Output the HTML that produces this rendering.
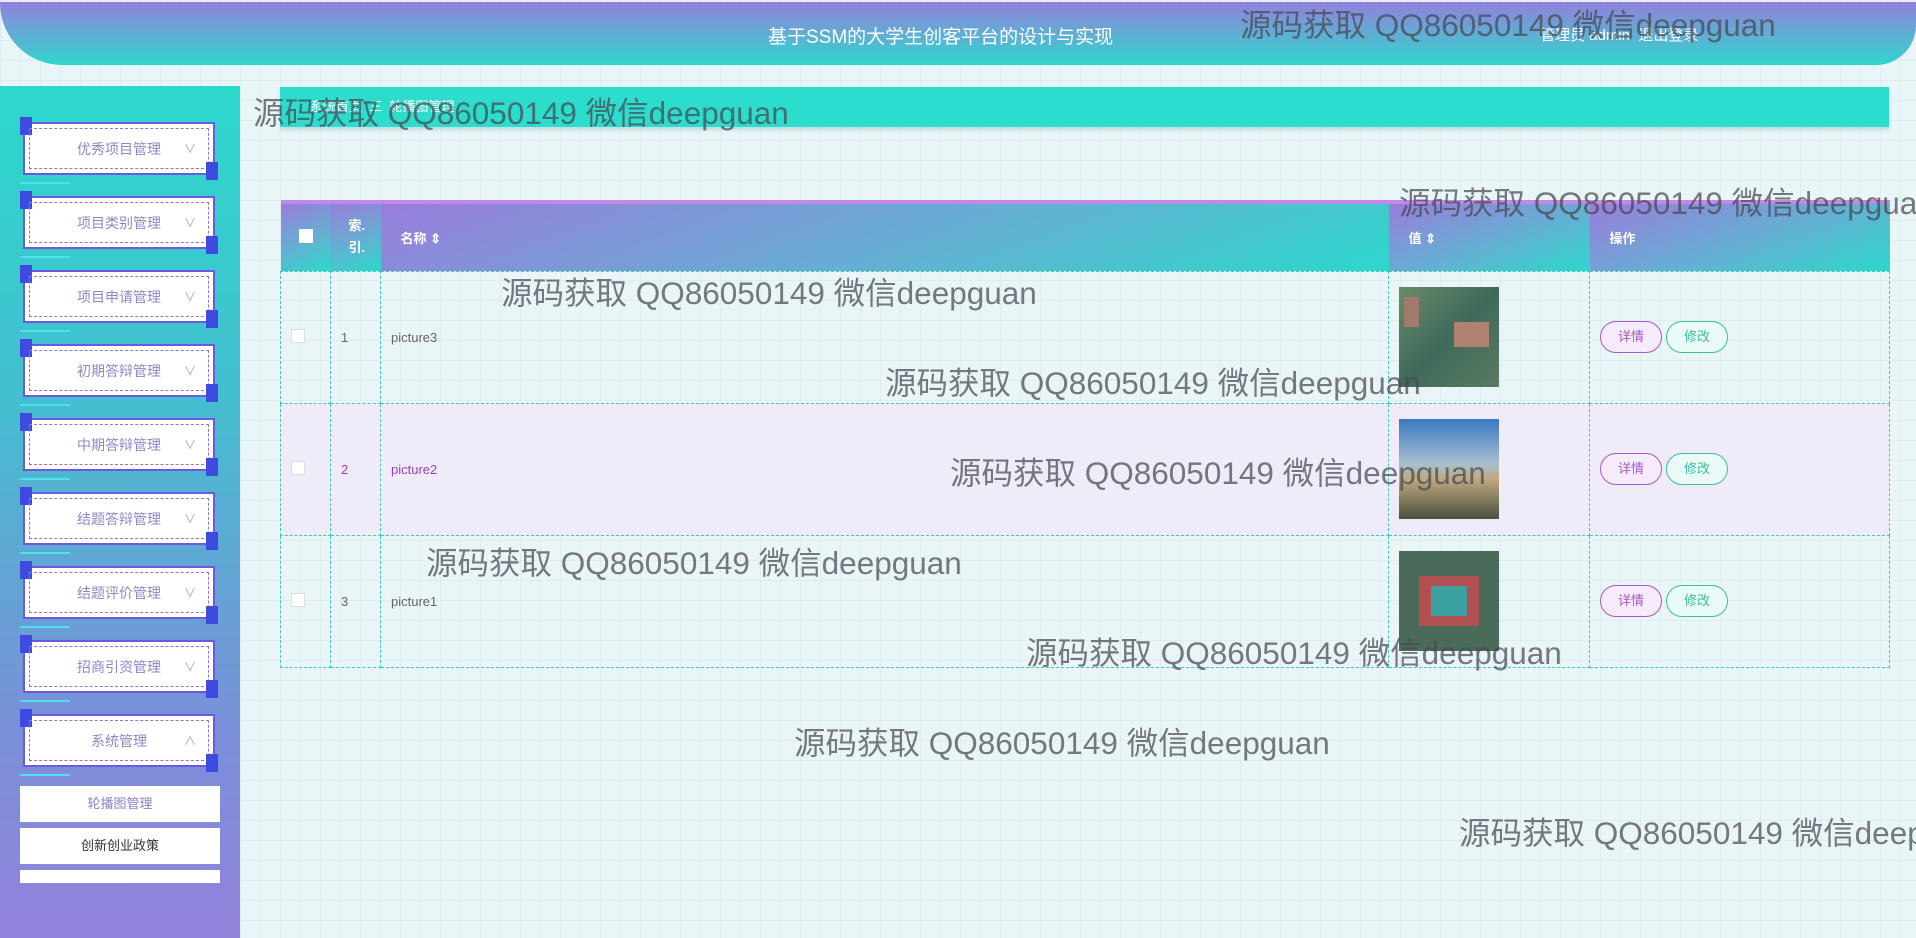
<!DOCTYPE html>
<html><head><meta charset="utf-8"><style>
*{margin:0;padding:0;box-sizing:border-box}
body{width:1916px;height:938px;overflow:hidden;position:relative;font-family:"Liberation Sans","Noto Sans CJK SC",sans-serif;
background-color:#e9f5f6;background-image:linear-gradient(rgba(180,210,215,.22) 1px,transparent 1px),linear-gradient(90deg,rgba(180,210,215,.22) 1px,transparent 1px);background-size:20px 20px;}
.hdr{position:absolute;left:0;top:2px;width:1916px;height:63px;background:linear-gradient(180deg,#9280dc 0%,#5cb1d4 55%,#2ed6cc 100%);border-radius:0 0 40px 62px}
.title{position:absolute;left:768px;top:22px;color:#fff;font-size:19px}
.user{position:absolute;left:1540px;top:24px;color:#fff;font-size:15px}
.side{position:absolute;left:0;top:86px;width:240px;height:852px;background:linear-gradient(180deg,#2dd8cc 0%,#42c0d0 35%,#7a90d8 75%,#9282dc 100%)}
.mi{position:absolute;left:23px;width:192px;height:53px;background:#fff;border:2px solid #6a5ae0}
.mi:before{content:"";position:absolute;left:-5px;top:-7px;width:12px;height:18px;background:#3f4ae0}
.mi:after{content:"";position:absolute;right:-5px;bottom:-7px;width:12px;height:18px;background:#3f4ae0}
.mi .in{position:absolute;left:4px;top:4px;right:4px;bottom:4px;border:1px dashed #9a72c0;text-align:center;line-height:41px;color:#9087c8;font-size:14px}
.mi .ar{position:absolute;right:12px;top:0;color:#aaa;font-size:12px}
.ln{position:absolute;left:20px;width:50px;height:2px;background:#4fe0f0}
.sub{position:absolute;left:20px;width:200px;height:36px;background:#fff;text-align:center;line-height:36px;font-size:13px}
.crumb{position:absolute;left:280px;top:87px;width:1609px;height:40px;background:#2cdccc;box-shadow:0 3px 3px rgba(100,170,180,.3);color:#fff;font-size:13px;line-height:40px;padding-left:30px}
table{position:absolute;left:280px;top:200px;width:1610px;border-collapse:collapse;border-top:4px solid #c28ae6}
th{height:69px;background:linear-gradient(160deg,#9a7ddc 0%,#5fb4d2 60%,#2cd8cc 100%);color:#fff;font-size:13px;text-align:left;padding-left:20px;font-weight:bold}
td{height:132px;border:1px dashed #3cc9c0;font-size:13px;color:#666;padding-left:10px}
tr.h td{background:#efebf8;color:#9b3fb8;border-color:#3cc9c0}
.cb{display:inline-block;width:14px;height:14px;background:#fff;border:1px solid #ddd}
.img{width:100px;height:100px;display:block}
.b{display:inline-block;width:62px;height:32px;border-radius:16px;text-align:center;line-height:30px;font-size:13px;margin-right:4px}
.b1{border:1px solid #a65ac8;background:#f6ebfa;color:#a65ac8}
.b2{border:1px solid #3cbea0;background:#eafaf6;color:#3cbea0}
.wm{position:absolute;font-size:31.5px;color:rgba(70,70,80,.72);white-space:nowrap;font-family:"Liberation Sans","Noto Sans CJK SC",sans-serif}
</style></head><body>
<div class="hdr"></div>
<div class="title">基于SSM的大学生创客平台的设计与实现</div>
<div class="user">管理员 admin &nbsp;退出登录</div>

<div class="side"></div>
<div class="mi" style="top:122px"><div class="in">优秀项目管理<span class="ar">∨</span></div></div><div class="ln" style="top:182px"></div>
<div class="mi" style="top:196px"><div class="in">项目类别管理<span class="ar">∨</span></div></div><div class="ln" style="top:256px"></div>
<div class="mi" style="top:270px"><div class="in">项目申请管理<span class="ar">∨</span></div></div><div class="ln" style="top:330px"></div>
<div class="mi" style="top:344px"><div class="in">初期答辩管理<span class="ar">∨</span></div></div><div class="ln" style="top:404px"></div>
<div class="mi" style="top:418px"><div class="in">中期答辩管理<span class="ar">∨</span></div></div><div class="ln" style="top:478px"></div>
<div class="mi" style="top:492px"><div class="in">结题答辩管理<span class="ar">∨</span></div></div><div class="ln" style="top:552px"></div>
<div class="mi" style="top:566px"><div class="in">结题评价管理<span class="ar">∨</span></div></div><div class="ln" style="top:626px"></div>
<div class="mi" style="top:640px"><div class="in">招商引资管理<span class="ar">∨</span></div></div><div class="ln" style="top:700px"></div>
<div class="mi" style="top:714px"><div class="in">系统管理<span class="ar">∧</span></div></div><div class="ln" style="top:774px"></div>
<div class="sub" style="top:786px;color:#8a80c8">轮播图管理</div>
<div class="sub" style="top:828px;color:#333">创新创业政策</div>
<div class="sub" style="top:870px;height:13px"></div>

<div class="crumb">系统首页 &nbsp;三&nbsp; 轮播图管理</div>

<table>
<tr><th style="width:50px;padding-left:18px"><span class="cb" style="border:none"></span></th><th style="width:50px;padding-left:18px;line-height:22px">索.<br>引.</th><th style="width:1008px">名称 ⇕</th><th style="width:201px">值 ⇕</th><th>操作</th></tr>
<tr><td><span class="cb"></span></td><td>1</td><td>picture3</td><td><svg class="img"><defs><linearGradient id="g1" x1="0" y1="0" x2="1" y2="1"><stop offset="0" stop-color="#6a8a6a"/><stop offset=".5" stop-color="#3f6a5a"/><stop offset="1" stop-color="#5a7a60"/></linearGradient></defs><rect width="100" height="100" fill="url(#g1)"/><rect x="5" y="10" width="15" height="30" fill="#a07a6a"/><rect x="55" y="35" width="35" height="25" fill="#b08070"/></svg></td><td><span class="b b1">详情</span><span class="b b2">修改</span></td></tr>
<tr class="h"><td><span class="cb"></span></td><td>2</td><td>picture2</td><td><svg class="img"><defs><linearGradient id="g2" x1="0" y1="0" x2="0" y2="1"><stop offset="0" stop-color="#3a78c0"/><stop offset=".45" stop-color="#a8c0d0"/><stop offset=".6" stop-color="#c0a880"/><stop offset="1" stop-color="#4a5040"/></linearGradient></defs><rect width="100" height="100" fill="url(#g2)"/></svg></td><td><span class="b b1">详情</span><span class="b b2">修改</span></td></tr>
<tr><td><span class="cb"></span></td><td>3</td><td>picture1</td><td><svg class="img"><rect width="100" height="100" fill="#4a6a5a"/><rect x="20" y="25" width="60" height="50" fill="#b05050"/><rect x="32" y="35" width="36" height="30" fill="#3aa0a0"/></svg></td><td><span class="b b1">详情</span><span class="b b2">修改</span></td></tr>
</table>

<div class="wm" style="left:253px;top:88px">源码获取 QQ86050149 微信deepguan</div>
<div class="wm" style="left:1240px;top:0px">源码获取 QQ86050149 微信deepguan</div>
<div class="wm" style="left:1399px;top:178px">源码获取 QQ86050149 微信deepguan</div>
<div class="wm" style="left:501px;top:268px">源码获取 QQ86050149 微信deepguan</div>
<div class="wm" style="left:885px;top:358px">源码获取 QQ86050149 微信deepguan</div>
<div class="wm" style="left:950px;top:448px">源码获取 QQ86050149 微信deepguan</div>
<div class="wm" style="left:426px;top:538px">源码获取 QQ86050149 微信deepguan</div>
<div class="wm" style="left:1026px;top:628px">源码获取 QQ86050149 微信deepguan</div>
<div class="wm" style="left:794px;top:718px">源码获取 QQ86050149 微信deepguan</div>
<div class="wm" style="left:1459px;top:808px">源码获取 QQ86050149 微信deepguan</div>
</body></html>
